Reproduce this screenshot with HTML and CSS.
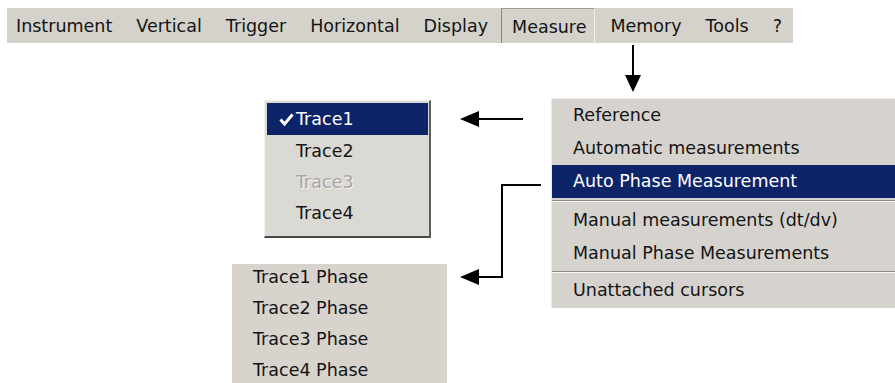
FILE: index.html
```html
<!DOCTYPE html>
<html lang="en">
<head>
  <meta charset="UTF-8">
  <meta name="viewport" content="width=device-width, initial-scale=1.0">
  <title>Measure Menu</title>
  <link rel="stylesheet" href="styles.css">
</head>
<body>
  <div class="canvas">
    <nav class="menubar">
      <span class="menubar-item">Instrument</span>
      <span class="menubar-item">Vertical</span>
      <span class="menubar-item">Trigger</span>
      <span class="menubar-item">Horizontal</span>
      <span class="menubar-item">Display</span>
      <span class="menubar-item is-open">Measure</span>
      <span class="menubar-item">Memory</span>
      <span class="menubar-item">Tools</span>
      <span class="menubar-item">?</span>
    </nav>

    <!-- Measure dropdown -->
    <ul class="menu menu-measure">
      <li class="menu-item">Reference</li>
      <li class="menu-item">Automatic measurements</li>
      <li class="menu-item is-active">Auto Phase Measurement</li>
      <li class="menu-sep"></li>
      <li class="menu-item">Manual measurements (dt/dv)</li>
      <li class="menu-item">Manual Phase Measurements</li>
      <li class="menu-sep menu-sep-small"></li>
      <li class="menu-item">Unattached cursors</li>
    </ul>

    <!-- Reference submenu -->
    <ul class="menu menu-trace">
      <li class="menu-item is-active">
        <span class="check">
          <svg width="15" height="13" viewBox="0 0 15 13"><path d="M1.5 6.5 L5.5 11 L13.5 1.5" fill="none" stroke="#fff" stroke-width="3"/></svg>
        </span>Trace1
      </li>
      <li class="menu-item"><span class="check"></span>Trace2</li>
      <li class="menu-item is-disabled"><span class="check"></span>Trace3</li>
      <li class="menu-item"><span class="check"></span>Trace4</li>
    </ul>

    <!-- Auto phase submenu -->
    <ul class="menu menu-phase">
      <li class="menu-item">Trace1 Phase</li>
      <li class="menu-item">Trace2 Phase</li>
      <li class="menu-item">Trace3 Phase</li>
      <li class="menu-item">Trace4 Phase</li>
    </ul>

    <svg class="arrows" width="895" height="383" viewBox="0 0 895 383">
      <g stroke="#000" stroke-width="2" fill="none">
        <line x1="633" y1="45" x2="633" y2="77"/>
        <line x1="523" y1="119" x2="477" y2="119"/>
        <polyline points="541,185 502,185 502,277 477,277"/>
      </g>
      <g fill="#000">
        <polygon points="625,75 641,75 633,92"/>
        <polygon points="479,111 479,127 460,119"/>
        <polygon points="479,269 479,285 460,277"/>
      </g>
    </svg>
  </div>
</body>
</html>
```

FILE: styles.css
```css
body {
  margin: 0;
  background: #fff;
  font-family: "DejaVu Sans", Verdana, sans-serif;
  font-size: 17.5px;
  color: #141414;
  overflow: hidden;
}
.canvas {
  position: relative;
  width: 895px;
  height: 383px;
  overflow: hidden;
  padding: 8px 0 0 7px;
  box-sizing: border-box;
}
.menubar {
  display: flex;
  align-items: stretch;
  gap: 6px;
  width: 786px;
  height: 35px;
  background: #d5d2cc;
}
.menubar-item {
  display: flex;
  align-items: center;
  padding: 0 9px;
}
.menubar-item.is-open {
  margin-left: -2px;
  padding: 1px 8px 0 10px;
  border-left: 1px solid #8a8884;
  border-top: 1px solid #a09d98;
  border-right: 1px solid #f2f1ee;
}

.menu {
  position: absolute;
  margin: 0;
  padding: 0;
  list-style: none;
}
.menu-item {
  white-space: nowrap;
}
.menu-item.is-active {
  background: #0d2468;
  color: #fff;
}

.menu-measure {
  left: 551px;
  top: 98px;
  width: 360px;
  padding-bottom: 1px;
  background: #d6d3ce;
  border-top: 1px solid #eceae6;
  border-left: 1px solid #eceae6;
}
.menu-measure .menu-item {
  height: 33px;
  line-height: 33px;
  padding-left: 21px;
}
.menu-sep {
  height: 6px;
  display: flex;
  flex-direction: column;
  justify-content: center;
}
.menu-sep::before {
  content: "";
  display: block;
  border-top: 1px solid #8c8a85;
  border-bottom: 1px solid #f6f5f2;
}
.menu-sep-small {
  height: 4px;
}

.menu-trace {
  left: 264px;
  top: 100px;
  width: 161px;
  height: 126px;
  padding: 2px 1px 7px 2px;
  background: #dbd9d3;
  border-top: 1px solid #f3f2ef;
  border-left: 1px solid #f3f2ef;
  border-right: 2px solid #5e5c58;
  border-bottom: 2px solid #4a4844;
}
.menu-trace .menu-item {
  display: flex;
  align-items: center;
  height: 31px;
}
.menu-trace .menu-item.is-active {
  height: 32px;
}
.check {
  display: flex;
  align-items: center;
  justify-content: flex-end;
  width: 27px;
  padding-right: 2px;
}
.menu-item.is-disabled {
  color: #a8a6a2;
  text-shadow: 1px 1px 0 #f8f7f4;
}

.menu-phase {
  left: 232px;
  top: 264px;
  width: 215px;
  height: 130px;
  background: #d8d3cd;
}
.menu-phase .menu-item {
  line-height: 27px;
  padding: 0 0 4px 21px;
}

.arrows {
  position: absolute;
  left: 0;
  top: 0;
  pointer-events: none;
}
```
